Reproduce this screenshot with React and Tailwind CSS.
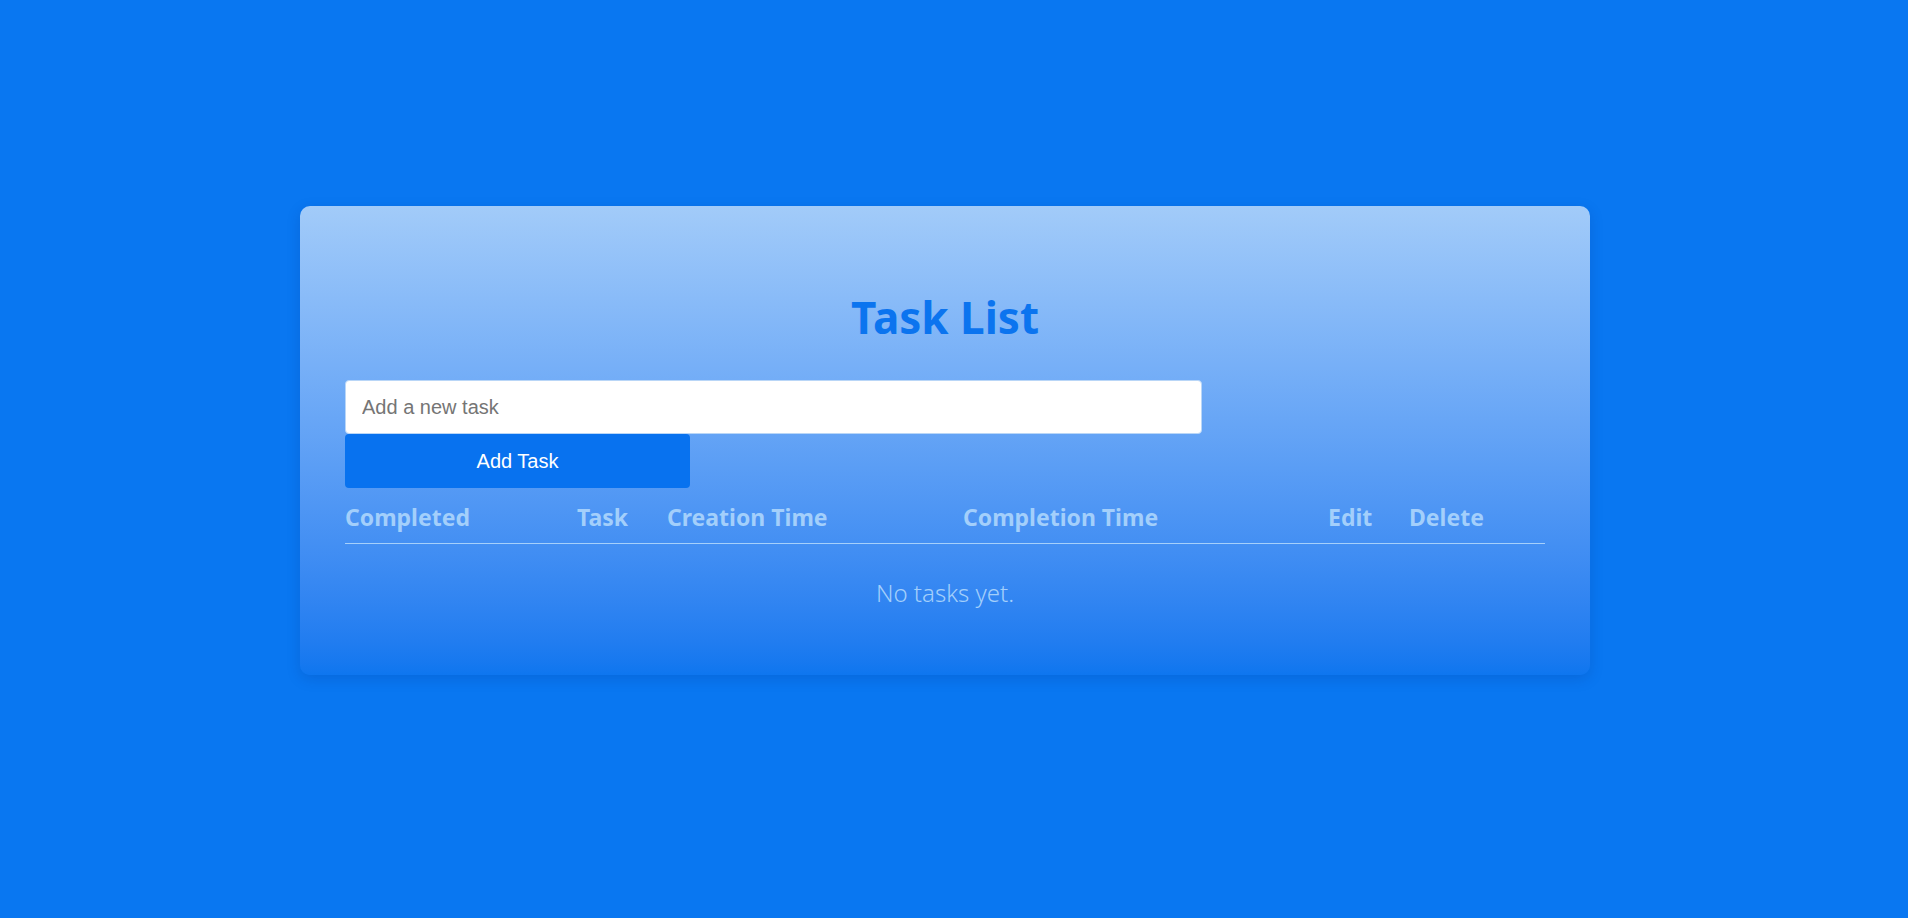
import React, { useState } from 'react'

const columns = [
    { label: 'Completed' },
    { label: 'Task' },
    { label: 'Creation Time' },
    { label: 'Completion Time' },
    { label: 'Edit' },
    { label: 'Delete' },
]

const TaskHeader = () => {
    return (
        <div className="mt-[14px] grid grid-cols-[232px_90px_296px_365px_81px_136px] border-b border-[#a6d0fb] pb-[10px]">
            {columns.map(c =>
                <div key={c.label} className="text-[23px] leading-[31px] font-bold text-[#a3cffb] whitespace-nowrap">
                    {c.label}
                </div>
            )}
        </div>
    )
}

const App = () => {
    const [task, setTask] = useState("")
    const [tasks] = useState([])

    return (
        <div className="min-h-[918px] w-full bg-[#0977f1] pt-[206px] pl-[300px] font-['Noto_Sans',sans-serif]">
            <div className="w-[1290px] rounded-[10px] bg-gradient-to-b from-[#a2cbf9] to-[#0e76ef] px-[45px] pt-[87px] pb-[66px] shadow-[0_4px_14px_rgba(0,40,120,0.18)]">
                <h1 className="text-center text-[44px] leading-[48px] font-bold text-[#0b74ef]">Task List</h1>

                <div className="mt-[39px] flex flex-col">
                    <input
                        type="text"
                        value={task}
                        onChange={(e)=>setTask(e.target.value)}
                        placeholder="Add a new task"
                        className="h-[54px] w-[857px] rounded-[4px] border border-[#b9d6f7] bg-white px-[16px] font-['Liberation_Sans',Arial,sans-serif] text-[20px] text-[#333] placeholder-[#757575] outline-none"
                    />
                    <button className="h-[54px] w-[345px] rounded-[4px] bg-[#0872ef] font-['Liberation_Sans',Arial,sans-serif] text-[20px] text-white">
                        Add Task
                    </button>
                </div>

                <TaskHeader />

                {
                    tasks.length === 0 ?
                        <p className="mt-[33px] text-center text-[24px] leading-[32px] font-light text-[#a3cffb]">No tasks yet.</p>
                    :null
                }
            </div>
        </div>
    )
}

export default App
